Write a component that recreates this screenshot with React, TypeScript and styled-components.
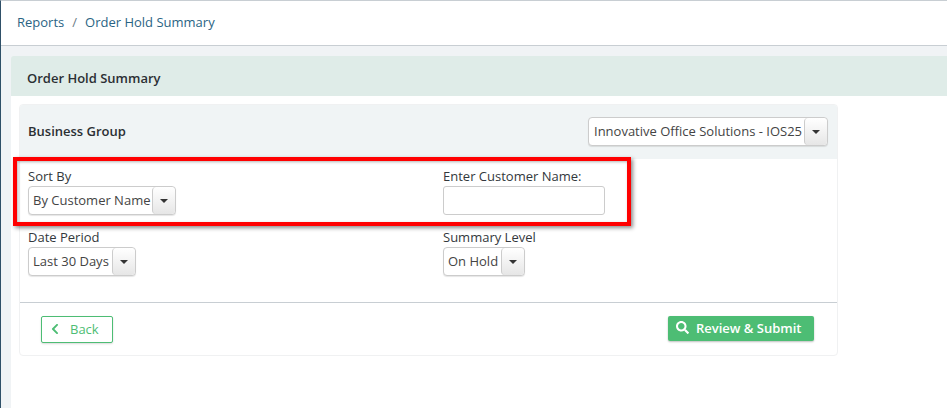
import React from 'react'
import styled, { createGlobalStyle } from 'styled-components'
import { FaSearch, FaChevronLeft } from 'react-icons/fa'

const GlobalStyle = createGlobalStyle`
  html, body {
    margin: 0;
    height: 100%;
    background: #fff;
    overflow: hidden;
  }
  body {
    font-family: "Open Sans", "Liberation Sans", sans-serif;
    font-size: 13px;
    color: #333;
  }
`

export default function App() {
  return (
    <Page>
      <GlobalStyle />
      <TopBar>
        <Crumbs>
          <span>Reports</span>
          <Slash>/</Slash>
          <span>Order Hold Summary</span>
        </Crumbs>
      </TopBar>
      <Body>
        <TitleBar>Order Hold Summary</TitleBar>
        <Content>
          <Card>
            <CardHead>
              <GroupLabel>Business Group</GroupLabel>
              <Select $width={240}>
                <SelectText $pad={5}>Innovative Office Solutions - IOS25</SelectText>
                <Caret><Arrow /></Caret>
              </Select>
            </CardHead>
            <FormGrid>
              <Field>
                <Label>Sort By</Label>
                <Select $width={148}>
                  <SelectText>By Customer Name</SelectText>
                  <Caret><Arrow /></Caret>
                </Select>
              </Field>
              <Field>
                <Label>Enter Customer Name:</Label>
                <TextBox type="text" />
              </Field>
              <Field>
                <Label>Date Period</Label>
                <Select $width={108}>
                  <SelectText>Last 30 Days</SelectText>
                  <Caret><Arrow /></Caret>
                </Select>
              </Field>
              <Field>
                <Label>Summary Level</Label>
                <Select $width={82}>
                  <SelectText>On Hold</SelectText>
                  <Caret><Arrow /></Caret>
                </Select>
              </Field>
            </FormGrid>
            <CardFoot>
              <BackButton>
                <FaChevronLeft size={12} />
                <span>Back</span>
              </BackButton>
              <SubmitButton>
                <FaSearch size={13} />
                <span>Review &amp; Submit</span>
              </SubmitButton>
            </CardFoot>
          </Card>
        </Content>
        <Highlight />
      </Body>
    </Page>
  )
}

const Page = styled.div`
  width: 947px;
  height: 408px;
  box-sizing: border-box;
  border-top: 1px solid #c8ced3;
  border-left: 1px solid #2f5068;
  background: #f0f3f5;
  display: flex;
  flex-direction: column;
  overflow: hidden;
`
const TopBar = styled.div`
  height: 44px;
  flex: none;
  background: #fff;
  border-bottom: 1px solid #c8ced3;
  display: flex;
  align-items: center;
  padding-left: 16px;
`
const Crumbs = styled.div`
  display: flex;
  gap: 8px;
  color: #2a6484;
  font-size: 13px;
  position: relative;
  top: -1px;
`
const Slash = styled.span`
  color: #6b7b85;
`
const Body = styled.div`
  position: relative;
  flex: 1;
  padding: 10px 0 0 10px;
  display: flex;
  flex-direction: column;
`
const TitleBar = styled.div`
  height: 40px;
  flex: none;
  box-sizing: border-box;
  padding: 3px 0 0 16px;
  background: #dfece8;
  border-radius: 3px 0 0 0;
  display: flex;
  align-items: center;
  font-weight: 600;
  font-size: 13px;
  color: #2b2f33;
`
const Content = styled.div`
  flex: 1;
  background: #fff;
  padding: 8px 0 0 8px;
`
const Card = styled.div`
  width: 819px;
  height: 252px;
  box-sizing: border-box;
  border: 1px solid #f0f1f2;
  border-radius: 4px;
  background: #fff;
  display: flex;
  flex-direction: column;
`
const CardHead = styled.div`
  height: 54px;
  flex: none;
  box-sizing: border-box;
  background: #f0f4f5;
  border-radius: 3px 3px 0 0;
  display: flex;
  align-items: center;
  justify-content: space-between;
  padding: 0 9px 1px 8px;
`
const GroupLabel = styled.div`
  font-weight: 600;
  font-size: 13px;
  color: #2b2f33;
  padding-bottom: 2px;
`
const FormGrid = styled.div`
  flex: 1;
  display: grid;
  grid-template-columns: 415px 1fr;
  grid-auto-rows: 61px;
  padding: 8px 8px 0;
`
const Field = styled.div`
  display: flex;
  flex-direction: column;
  align-items: flex-start;
`
const Label = styled.label`
  height: 19px;
  line-height: 19px;
  font-size: 13px;
  color: #33383c;
`
const Select = styled.div<{ $width: number }>`
  width: ${(p) => p.$width}px;
  height: 29px;
  box-sizing: border-box;
  border: 1px solid #ccc;
  border-radius: 4px;
  background: #fff;
  box-shadow: 0 1px 1px rgba(0, 0, 0, 0.1);
  display: flex;
  overflow: hidden;
`
const SelectText = styled.div<{ $pad?: number }>`
  flex: 1;
  min-width: 0;
  padding-left: ${(p) => p.$pad ?? 4}px;
  line-height: 27px;
  font-size: 13px;
  color: #444;
  white-space: nowrap;
  overflow: hidden;
`
const Caret = styled.div`
  width: 23px;
  flex: none;
  box-sizing: border-box;
  border-left: 1px solid #ccc;
  border-radius: 4px;
  background: linear-gradient(#fff, #e6e6e6);
  display: flex;
  align-items: center;
  justify-content: center;
`
const Arrow = styled.i`
  width: 0;
  height: 0;
  border-left: 4px solid transparent;
  border-right: 4px solid transparent;
  border-top: 4px solid #333;
`
const TextBox = styled.input`
  width: 162px;
  height: 29px;
  box-sizing: border-box;
  border: 1px solid #ccc;
  border-radius: 3px;
  background: #fff;
  outline: none;
`
const CardFoot = styled.div`
  height: 53px;
  flex: none;
  box-sizing: border-box;
  border-top: 1px solid #c8ced3;
  display: flex;
  justify-content: space-between;
  align-items: flex-start;
  padding: 13px 23px 0 21px;
`
const BackButton = styled.button`
  width: 72px;
  height: 27px;
  box-sizing: border-box;
  border: 1px solid #4dbd74;
  border-radius: 2px;
  background: #fff;
  box-shadow: 0 1px 2px rgba(0, 0, 0, 0.15);
  color: #4dbd74;
  font-family: inherit;
  font-size: 13px;
  font-weight: 500;
  padding: 0 0 2px 7px;
  display: flex;
  align-items: center;
  gap: 9px;
`
const SubmitButton = styled.button`
  width: 146px;
  height: 25px;
  box-sizing: border-box;
  border: none;
  border-radius: 2px;
  background: #4dbd74;
  box-shadow: 0 1px 2px rgba(0, 0, 0, 0.25);
  color: #fff;
  font-family: inherit;
  font-size: 13px;
  font-weight: 600;
  padding: 0 0 2px 8px;
  display: flex;
  align-items: center;
  gap: 7px;
`
const Highlight = styled.div`
  position: absolute;
  left: 12px;
  top: 111px;
  width: 618px;
  height: 69px;
  box-sizing: border-box;
  border: 4px solid #f00;
  box-shadow: 2px 2px 4px rgba(0, 0, 0, 0.45), inset 1px 1px 3px rgba(0, 0, 0, 0.3);
  pointer-events: none;
`
